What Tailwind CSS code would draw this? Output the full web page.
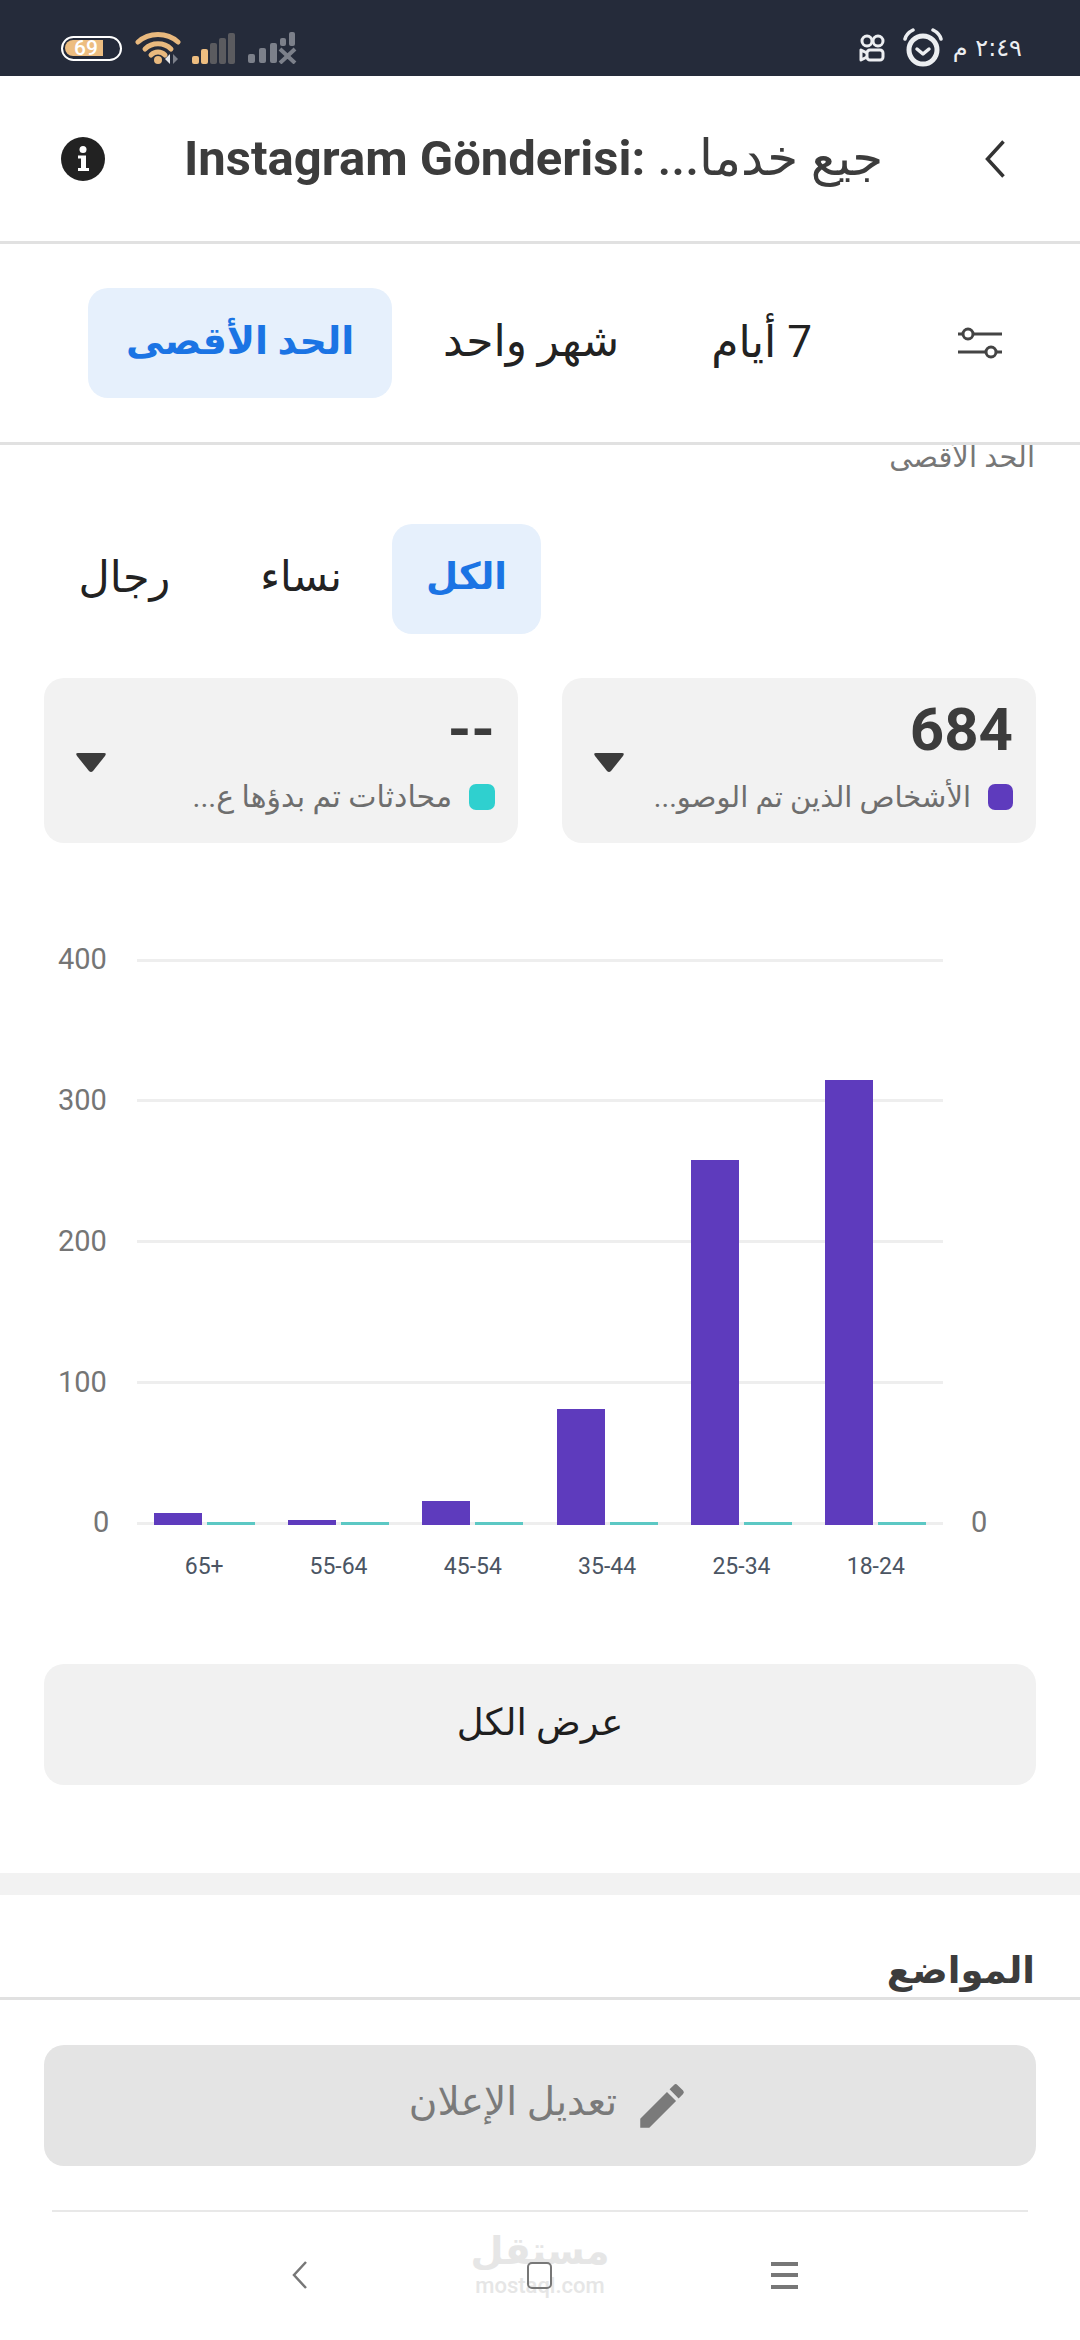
<!DOCTYPE html>
<html lang="ar" dir="rtl">
<head>
<meta charset="utf-8">
<script src="https://cdn.jsdelivr.net/npm/@tailwindcss/browser@4"></script>
</head>
<body class="bg-white font-['Roboto','DejaVu_Sans',sans-serif]">
<div class="relative w-[1080px] h-[2340px] overflow-hidden flex flex-col bg-white">

  <!-- status bar -->
  <div dir="ltr" class="h-[76px] shrink-0 bg-[#252b3a] flex items-center justify-between pl-[61px] pr-[58px] pt-[20px]">
    <div class="flex items-center">
      <div class="relative w-[61px] h-[25px] rounded-full border-[2.5px] border-white overflow-hidden flex items-center">
        <div class="w-[38px] h-[16px] ml-[2px] rounded-l-full bg-[#edbd80]"></div>
        <span class="absolute left-[11px] top-[-2px] text-[21px] leading-[25px] text-white font-medium">69</span>
      </div>
      <svg class="ml-[13px]" width="48" height="34" viewBox="0 0 48 34" fill="none">
        <path d="M3 11C14 1 32 1 43 11" stroke="#e9b97e" stroke-width="5" stroke-linecap="round"/>
        <path d="M10 18C17 11 29 11 36 18" stroke="#e9b97e" stroke-width="5" stroke-linecap="round"/>
        <path d="M16 24C20 20 26 20 30 24" stroke="#e9b97e" stroke-width="5" stroke-linecap="round"/>
        <circle cx="23" cy="29" r="4" fill="#e9b97e"/>
        <path d="M35 23V33L30 28Z" fill="#e5e7eb"/>
        <path d="M38 23V33L43 28Z" fill="#7c808a"/>
      </svg>
      <div class="ml-[9px] flex items-end gap-[2px] h-[32px]">
        <div class="w-[7px] h-[8px] rounded-[2px] bg-[#edbd80]"></div>
        <div class="w-[7px] h-[15px] rounded-[2px] bg-[#edbd80]"></div>
        <div class="w-[7px] h-[21px] rounded-[2px] bg-[#5b5b5f]"></div>
        <div class="w-[7px] h-[26px] rounded-[2px] bg-[#5b5b5f]"></div>
        <div class="w-[7px] h-[31px] rounded-[2px] bg-[#5b5b5f]"></div>
      </div>
      <svg class="ml-[13px]" width="50" height="32" viewBox="0 0 50 32" fill="#7c808a">
        <rect x="0" y="22" width="7" height="9" rx="2"/>
        <rect x="11" y="16" width="7" height="15" rx="2"/>
        <rect x="22" y="11" width="7" height="20" rx="2"/>
        <rect x="32" y="6" width="6" height="8" rx="2"/>
        <rect x="41" y="0" width="6" height="14" rx="2"/>
        <path d="M32 17L47 31M47 17L32 31" stroke="#7c808a" stroke-width="4"/>
      </svg>
    </div>
    <div class="flex items-center">
      <svg width="26" height="28" viewBox="0 0 26 28" fill="none" stroke="#eceef1" stroke-width="3">
        <circle cx="8" cy="7" r="5"/>
        <circle cx="19" cy="7" r="5"/>
        <rect x="8" y="16" width="16" height="10" rx="3"/>
        <path d="M8 19L2 16V26L8 23" stroke-linejoin="round"/>
      </svg>
      <svg class="ml-[17px]" width="42" height="40" viewBox="0 0 42 40" fill="none" stroke="#eceef1">
        <circle cx="21" cy="22" r="14" stroke-width="5"/>
        <path d="M15 21L21 26L27 21" stroke-width="3.5" stroke-linecap="round" stroke-linejoin="round"/>
        <path d="M3 11C4 7 7 4 11 2M39 11C38 7 35 4 31 2" stroke-width="3.5" stroke-linecap="round"/>
      </svg>
      <span class="ml-[9px] text-[24px] leading-[30px] text-[#eceef1] font-['DejaVu_Sans']" dir="rtl">٢:٤٩ م</span>
    </div>
  </div>

  <!-- header -->
  <div dir="ltr" class="h-[168px] shrink-0 border-b-[3px] border-[#e1e1e1] flex items-center pl-[61px] pr-[75px]">
    <svg width="44" height="44" viewBox="0 0 44 44">
      <circle cx="22" cy="22" r="22" fill="#222"/>
      <circle cx="22" cy="12.5" r="3.5" fill="#fff"/>
      <path d="M17 18.5H25V31H28V34H17V31H20V21.5H17Z" fill="#fff"/>
    </svg>
    <div class="flex-1 pl-[79px] text-[49px] leading-[60px] font-bold text-[#3c3c3c] whitespace-nowrap">Instagram Gönderisi: <span class="text-[50px] font-medium">جيع خدما...&rlm;</span></div>
    <svg width="20" height="38" viewBox="0 0 20 38" fill="none" stroke="#333" stroke-width="3.5">
      <path d="M18.5 1.5L2.5 19L18.5 36.5"/>
    </svg>
  </div>

  <!-- range tabs -->
  <div class="h-[201px] shrink-0 border-b-[3px] border-[#e1e1e1] flex items-center pr-[78px]">
    <svg class="shrink-0" width="44" height="32" viewBox="0 0 44 32" fill="none" stroke="#444" stroke-width="3">
      <path d="M0 7H5M15 7H44"/>
      <circle cx="10" cy="7" r="5"/>
      <path d="M0 25H28M38 25H44"/>
      <circle cx="33" cy="25" r="5"/>
    </svg>
    <div class="mr-[146px] pb-[2px] text-[44px] leading-[50px] text-[#222]"><span dir="rtl">7 أيام</span></div>
    <div class="mr-[92px] pb-[4px] text-[44px] leading-[50px] text-[#222]">شهر واحد</div>
    <div class="mr-[51px] pb-[4px] h-[110px] w-[304px] rounded-[20px] bg-[#e6f0fc] flex items-center justify-center text-[38px] font-bold text-[#1b74e4]">الحد الأقصى</div>
  </div>

  <!-- scrolling content -->
  <div class="h-[1552px] shrink-0 overflow-hidden">
    <div class="-mt-[10px] pr-[45px] h-[44px] text-[29px] leading-[44px] text-[#777]">الحد الأقصى</div>

    <div class="mt-[45px] pr-[539px] flex items-center">
      <div class="h-[110px] w-[149px] pb-[4px] rounded-[20px] bg-[#e6f0fc] flex items-center justify-center text-[37px] font-bold text-[#1b74e4]">الكل</div>
      <div class="mr-[50px] pb-[4px] text-[42px] leading-[50px] text-[#222]">نساء</div>
      <div class="mr-[90px] pb-[4px] text-[43px] leading-[50px] text-[#222]">رجال</div>
    </div>

    <div class="mt-[44px] px-[44px] flex gap-[44px]">
      <div class="relative w-[474px] h-[165px] rounded-[20px] bg-[#f2f2f2] pr-[23px] pt-[20px]">
        <div class="text-[60px] leading-[64px] font-bold text-[#3c3c3c] text-right" dir="ltr">684</div>
        <div class="mt-[20px] flex items-center">
          <span class="w-[25px] h-[26px] rounded-[7px] bg-[#5e3bbd] shrink-0"></span>
          <span class="mr-[17px] text-[29px] leading-[30px] text-[#6e6e6e] whitespace-nowrap">الأشخاص الذين تم الوصو...</span>
        </div>
        <svg class="absolute left-[32px] top-[75px]" width="30" height="20" viewBox="0 0 30 20"><path d="M2 0H28Q31 0 29 3L17 18Q15 20 13 18L1 3Q-1 0 2 0Z" fill="#3c3c3c"/></svg>
      </div>
      <div class="relative w-[474px] h-[165px] rounded-[20px] bg-[#f2f2f2] pr-[23px] pt-[20px]">
        <div class="text-[60px] leading-[64px] font-bold text-[#3c3c3c] text-right" dir="ltr">--</div>
        <div class="mt-[20px] flex items-center">
          <span class="w-[26px] h-[26px] rounded-[7px] bg-[#2fd0cf] shrink-0"></span>
          <span class="mr-[17px] text-[30px] leading-[30px] text-[#6e6e6e] whitespace-nowrap">محادثات تم بدؤها ع...</span>
        </div>
        <svg class="absolute left-[32px] top-[75px]" width="30" height="20" viewBox="0 0 30 20"><path d="M2 0H28Q31 0 29 3L17 18Q15 20 13 18L1 3Q-1 0 2 0Z" fill="#3c3c3c"/></svg>
      </div>
    </div>

    <!-- chart -->
    <div dir="ltr" class="relative mt-[117px] h-[563px] mr-[72px] w-[950px]">
      <div class="absolute inset-0 flex flex-col justify-between">
        <div class="h-0 flex items-center"><span class="w-[79px] text-[29px] text-[#757575]">400</span><span class="w-[806px] h-[3px] bg-[#eeeeee]"></span></div>
        <div class="h-0 flex items-center"><span class="w-[79px] text-[29px] text-[#757575]">300</span><span class="w-[806px] h-[3px] bg-[#eeeeee]"></span></div>
        <div class="h-0 flex items-center"><span class="w-[79px] text-[29px] text-[#757575]">200</span><span class="w-[806px] h-[3px] bg-[#eeeeee]"></span></div>
        <div class="h-0 flex items-center"><span class="w-[79px] text-[29px] text-[#757575]">100</span><span class="w-[806px] h-[3px] bg-[#eeeeee]"></span></div>
        <div class="h-0 flex items-center"><span class="w-[79px] pl-[35px] text-[29px] text-[#757575]">0</span><span class="w-[806px] h-[3px] bg-[#eeeeee]"></span><span class="ml-[28px] text-[29px] text-[#757575]">0</span></div>
      </div>
      <div class="absolute left-[79px] bottom-[-2px] w-[806px] flex items-end">
        <div class="flex-1 flex justify-center items-end gap-[5px]"><span class="w-[48px] h-[12px] bg-[#5e3bbd]"></span><span class="w-[48px] h-[3px] bg-[#5cc8c4]"></span></div>
        <div class="flex-1 flex justify-center items-end gap-[5px]"><span class="w-[48px] h-[5px] bg-[#5e3bbd]"></span><span class="w-[48px] h-[3px] bg-[#5cc8c4]"></span></div>
        <div class="flex-1 flex justify-center items-end gap-[5px]"><span class="w-[48px] h-[24px] bg-[#5e3bbd]"></span><span class="w-[48px] h-[3px] bg-[#5cc8c4]"></span></div>
        <div class="flex-1 flex justify-center items-end gap-[5px]"><span class="w-[48px] h-[116px] bg-[#5e3bbd]"></span><span class="w-[48px] h-[3px] bg-[#5cc8c4]"></span></div>
        <div class="flex-1 flex justify-center items-end gap-[5px]"><span class="w-[48px] h-[365px] bg-[#5e3bbd]"></span><span class="w-[48px] h-[3px] bg-[#5cc8c4]"></span></div>
        <div class="flex-1 flex justify-center items-end gap-[5px]"><span class="w-[48px] h-[445px] bg-[#5e3bbd]"></span><span class="w-[48px] h-[3px] bg-[#5cc8c4]"></span></div>
      </div>
    </div>
    <div dir="ltr" class="mt-[29px] mr-[137px] w-[806px] flex text-[23px] leading-[30px] text-[#4b5563] text-center">
      <span class="flex-1">65+</span><span class="flex-1">55-64</span><span class="flex-1">45-54</span><span class="flex-1">35-44</span><span class="flex-1">25-34</span><span class="flex-1">18-24</span>
    </div>

    <div class="mt-[82px] mx-[44px] pb-[4px] h-[121px] rounded-[20px] bg-[#f1f1f1] flex items-center justify-center text-[37px] text-[#1e1e1e]">عرض الكل</div>

    <div class="mt-[88px] h-[22px] bg-[#f2f2f2]"></div>

    <div class="mt-[46px] pr-[45px] text-[37px] leading-[60px] font-bold text-[#3c3c3c]">المواضع</div>
  </div>

  <!-- footer -->
  <div class="relative flex-1 border-t-[3px] border-[#e1e1e1] bg-white">
    <div class="mt-[45px] mx-[44px] pl-[20px] h-[121px] rounded-[20px] bg-[#e4e4e4] flex items-center justify-center text-[39px] text-[#7a7a7a]">
      <svg width="58" height="58" viewBox="0 0 24 24" fill="#7a7a7a"><path d="M3 17.25V21h3.75L17.81 9.94l-3.75-3.75L3 17.25zM20.71 7.04a1 1 0 000-1.41l-2.34-2.34a1 1 0 00-1.41 0l-1.83 1.83 3.75 3.75 1.83-1.83z"/></svg>
      <span class="mr-[16px] pb-[6px]">تعديل الإعلان</span>
    </div>
    <div class="mt-[44px] mx-[52px] h-[2px] bg-[#e8e8e8]"></div>

    <!-- mostaql watermark -->
    <div dir="ltr" class="absolute left-[475px] top-[228px] w-[130px] flex flex-col items-center text-[#e6e6e6] whitespace-nowrap">
      <span class="text-[38px] leading-[46px] font-bold">مستقل</span>
      <span class="text-[22px] leading-[24px] font-medium">mostaql.com</span>
    </div>

    <!-- system nav -->
    <div dir="ltr" class="absolute left-[292px] top-[261px] w-[506px] h-[28px] flex items-center justify-between">
      <svg width="15" height="28" viewBox="0 0 15 28" fill="none" stroke="#777" stroke-width="2.5"><path d="M14 1L2 14L14 27"/></svg>
      <span class="w-[25px] h-[27px] rounded-[5px] border-[2.5px] border-[#777]"></span>
      <span class="w-[27px] h-[27px] flex flex-col justify-between">
        <span class="h-[4px] bg-[#777]"></span><span class="h-[4px] bg-[#777]"></span><span class="h-[4px] bg-[#777]"></span>
      </span>
    </div>
  </div>
</div>
</body>
</html>
